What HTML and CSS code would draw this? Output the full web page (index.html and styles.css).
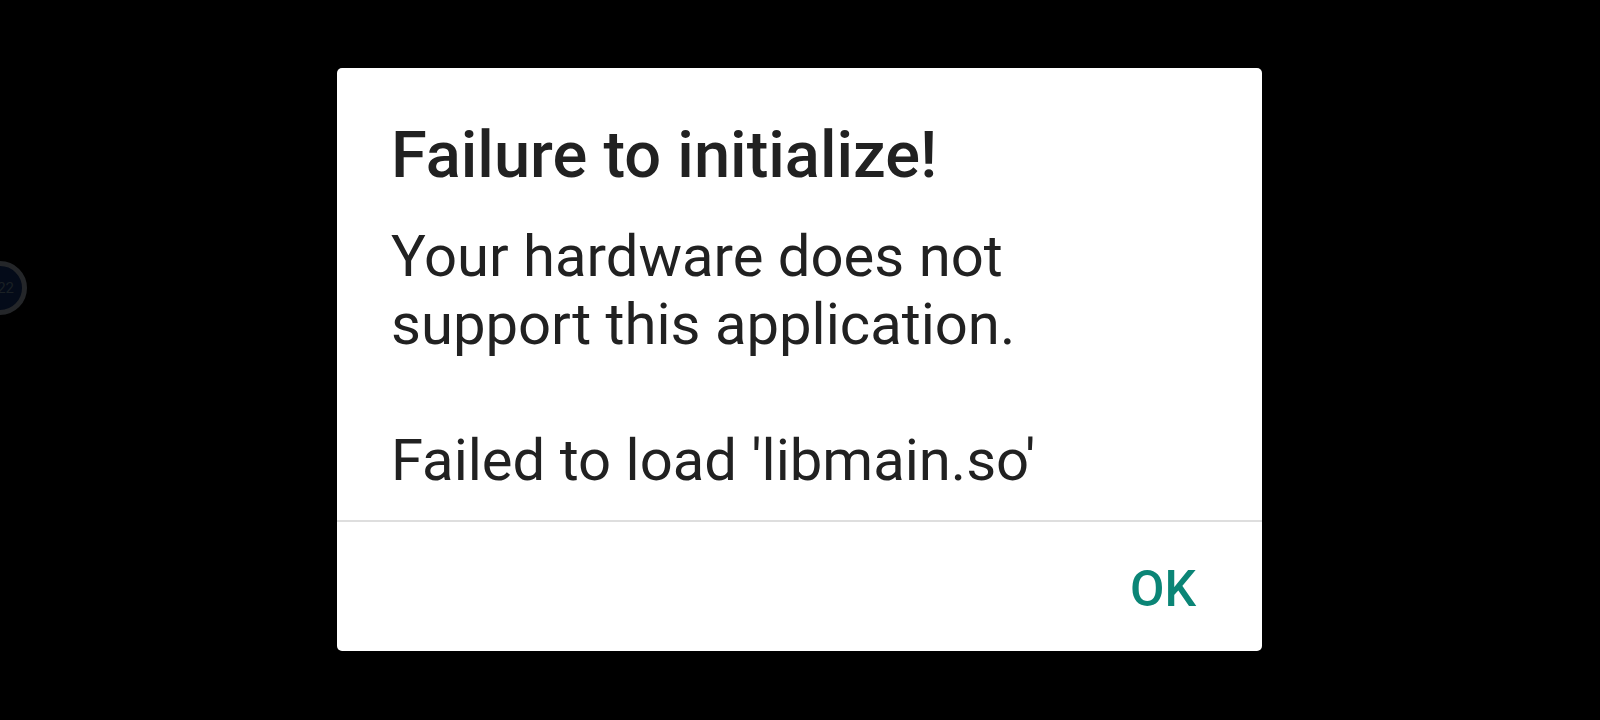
FILE: index.html
```html
<!DOCTYPE html>
<html lang="en">
<head>
<meta charset="utf-8">
<title>Failure to initialize!</title>
<link rel="stylesheet" href="styles.css">
</head>
<body>
<main class="screen">
  <section class="dialog" role="alertdialog" aria-labelledby="title" aria-describedby="message">
    <div class="content">
      <h1 class="title" id="title">Failure to initialize!</h1>
      <div class="message" id="message">
        <p>Your hardware does not support this application.</p>
        <p>Failed to load 'libmain.so'</p>
      </div>
    </div>
    <div class="actions">
      <button class="ok" type="button">OK</button>
    </div>
  </section>
</main>
<div class="bubble">22</div>
</body>
</html>
```

FILE: styles.css
```css
* { box-sizing: border-box; }

body {
  margin: 0;
  background: #000;
  color: #212121;
  font-family: Roboto, sans-serif;
}

.screen {
  min-height: 100vh;
  padding: 0 1px 1px 0;
  display: flex;
  align-items: center;
  justify-content: center;
}

.dialog {
  width: 58%;
  max-width: 925px;
  background: #fff;
  border-radius: 5px;
}

.content { padding: 50px 54px 26px; }

.title {
  margin: 0;
  font-size: 65px;
  line-height: 75px;
  font-weight: 500;
}

.message {
  margin-top: 29px;
  font-size: 58px;
  line-height: 68px;
}

.message p { margin: 0; }
.message p + p { margin-top: 68px; }

.actions {
  display: flex;
  justify-content: flex-end;
  padding: 19px 50px 14px;
  border-top: 2px solid #dedede;
}

.ok {
  padding: 16px;
  border: 0;
  background: none;
  color: #0b8576;
  font: 500 50px/64px Roboto, sans-serif;
}

.bubble {
  position: absolute;
  left: -27px;
  top: 261px;
  width: 54px;
  height: 54px;
  border: 5px solid #242629;
  border-radius: 50%;
  background: #040b19;
  color: #1a2024;
  font-size: 15px;
  line-height: 44px;
  text-align: right;
  padding-right: 8px;
}
```
